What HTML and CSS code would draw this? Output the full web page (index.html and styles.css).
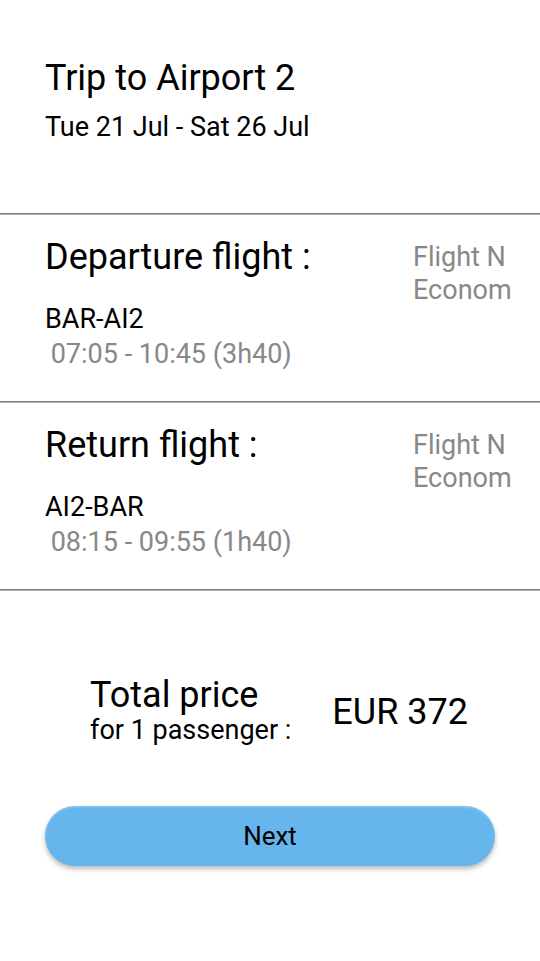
FILE: index.html
```html
<!DOCTYPE html>
<html lang="en">
<head>
<meta charset="utf-8">
<title>Trip to Airport 2</title>
<link rel="stylesheet" href="styles.css">
</head>
<body>
<div class="screen">
  <header class="trip-header">
    <h1 class="trip-title">Trip to Airport 2</h1>
    <p class="trip-dates">Tue 21 Jul - Sat 26 Jul</p>
  </header>
  <div class="divider"></div>
  <section class="flight">
    <div class="flight-main">
      <h2 class="flight-heading">Departure flight :</h2>
      <p class="flight-route">BAR-AI2</p>
      <p class="flight-time">&nbsp;07:05 - 10:45 (3h40)</p>
    </div>
    <div class="flight-side">
      <span>Flight N</span>
      <span>Econom</span>
    </div>
  </section>
  <div class="divider"></div>
  <section class="flight">
    <div class="flight-main">
      <h2 class="flight-heading">Return flight :</h2>
      <p class="flight-route">AI2-BAR</p>
      <p class="flight-time">&nbsp;08:15 - 09:55 (1h40)</p>
    </div>
    <div class="flight-side">
      <span>Flight N</span>
      <span>Econom</span>
    </div>
  </section>
  <div class="divider"></div>
  <section class="total">
    <div class="total-label">
      <span class="total-big">Total price</span>
      <span class="total-small">for 1 passenger :</span>
    </div>
    <div class="total-amount">EUR 372</div>
  </section>
  <button class="next-btn" type="button">Next</button>
</div>
</body>
</html>
```
FILE: styles.css
```css
* {
  box-sizing: border-box;
}

html, body {
  margin: 0;
  padding: 0;
  background: #ffffff;
}

body {
  font-family: Roboto, "Liberation Sans", Arial, sans-serif;
  color: #000000;
}

.screen {
  width: 540px;
  min-height: 961px;
  display: flex;
  flex-direction: column;
}

.trip-header {
  padding: 57px 0 70px 45px;
}

.trip-title {
  margin: 0;
  font-size: 36px;
  line-height: 42px;
  font-weight: 400;
}

.trip-dates {
  margin: 12px 0 0;
  font-size: 27px;
  line-height: 32px;
}

.divider {
  height: 2px;
  border-top: 1px solid #7b7b7b;
  border-bottom: 1px solid #b3b3b3;
}

.flight {
  display: flex;
  padding: 21px 0 29px 45px;
}

.flight-main {
  flex: 1;
  display: flex;
  flex-direction: column;
}

.flight-heading {
  margin: 0 0 24px;
  font-size: 36px;
  line-height: 42px;
  font-weight: 400;
}

.flight-route,
.flight-time {
  margin: 0;
  font-size: 27px;
  line-height: 35px;
  white-space: pre;
}

.flight-time {
  margin-left: -1px;
  color: #888888;
}

.flight-side {
  width: 127px;
  margin-top: 5px;
  display: flex;
  flex-direction: column;
  font-size: 27px;
  line-height: 33px;
  color: #888888;
  white-space: nowrap;
  overflow: hidden;
}

.total {
  display: flex;
  align-items: flex-start;
  gap: 41px;
  padding: 84px 0 0 90px;
}

.total-label {
  display: flex;
  flex-direction: column;
}

.total-big {
  font-size: 36px;
  line-height: 41px;
}

.total-small {
  font-size: 27px;
  line-height: 28px;
}

.total-amount {
  margin-top: 16px;
  font-size: 36px;
  line-height: 42px;
}

.next-btn {
  margin: 62px 45px 0;
  height: 60px;
  border: none;
  border-radius: 30px;
  background: #67b5ed;
  box-shadow: 0 3px 5px rgba(0, 0, 0, 0.28), inset 0 2px 2px rgba(255, 255, 255, 0.18);
  font-family: Roboto, "Liberation Sans", Arial, sans-serif;
  font-size: 26px;
  color: #000000;
  padding: 0;
}
```
